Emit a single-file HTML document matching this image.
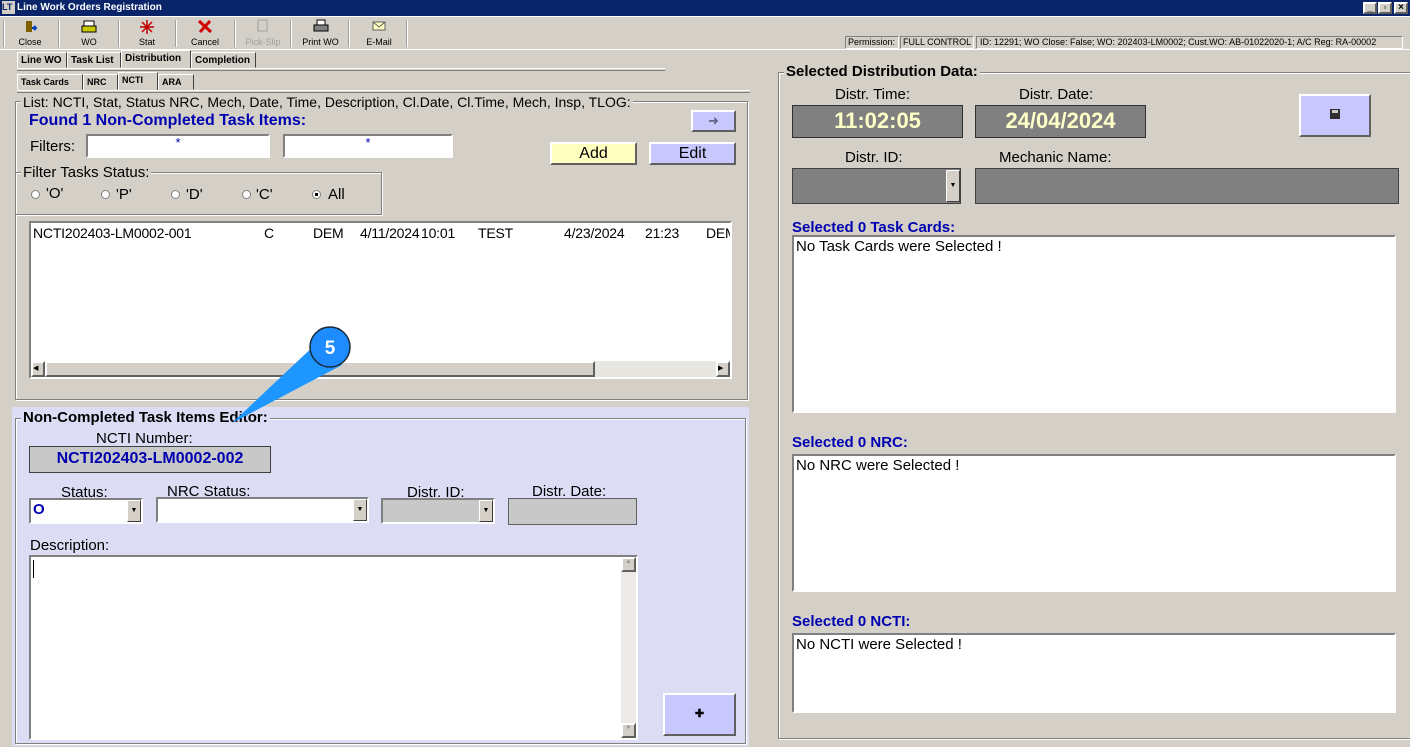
<!DOCTYPE html>
<html><head><meta charset="utf-8"><style>
*{box-sizing:border-box;margin:0;padding:0}
body{width:1410px;height:747px;background:#d4d0c8;font-family:"Liberation Sans",Arial,sans-serif;position:relative;overflow:hidden;color:#000}
.a{position:absolute}
.sunk{border:2px solid;border-color:#808080 #fff #fff #808080;background:#fff}
.rais{border:2px solid;border-color:#fff #606060 #606060 #fff}
.tb{position:absolute;top:19px;height:30px;font-size:9px;text-align:center;color:#000}
.tb span{position:absolute;bottom:2px;left:0;right:0}
.sep{position:absolute;top:20px;width:2px;height:27px;border-left:1px solid #a0a0a0;border-right:1px solid #fff}
.tab{position:absolute;font-size:10px;font-weight:bold;height:16px;line-height:15px;padding:0 3px;white-space:nowrap;overflow:hidden;border:1px solid;border-color:#fff #404040 transparent #fff;}
.grp{position:absolute;border:1px solid #808080;box-shadow:1px 1px 0 #fff inset,1px 1px 0 #fff}
.gt{position:absolute;background:#d4d0c8;padding:0 2px;font-size:14px;white-space:nowrap}
.lbl{position:absolute;font-size:14px;white-space:nowrap}
.blue{color:#0000b0;font-weight:bold;font-size:15px}
.rad{position:absolute;width:9px;height:9px;border-radius:50%;background:#fff;border:1px solid #808080}
.dd{position:absolute;width:14px;background:#d4d0c8;border:1px solid;border-color:#fff #404040 #404040 #fff;font-size:7px;text-align:center}
.row span{position:absolute;top:0}
</style></head><body>
<!-- title bar -->
<div class="a" style="left:0;top:0;width:1410px;height:16px;background:#0a246a"></div>
<div class="a" style="left:2px;top:1px;width:13px;height:13px;background:#d4d0c8;font-size:9px;color:#0a246a;font-weight:bold;line-height:13px">LT</div>
<div class="a" style="left:17px;top:2px;color:#fff;font-size:10px;font-weight:bold">Line Work Orders Registration</div>
<div class="a rais" style="left:1363px;top:2px;width:14px;height:12px;background:#d4d0c8;font-size:9px;line-height:8px;text-align:center;font-weight:bold">_</div>
<div class="a rais" style="left:1378px;top:2px;width:14px;height:12px;background:#d4d0c8;font-size:8px;line-height:8px;text-align:center;font-weight:bold">▫</div>
<div class="a rais" style="left:1394px;top:2px;width:14px;height:12px;background:#d4d0c8;font-size:10px;line-height:8px;text-align:center;font-weight:bold">×</div>
<!-- toolbar -->
<div class="a" style="left:0;top:16px;width:1410px;height:1px;background:#fff"></div>
<div class="sep" style="left:3px"></div>
<div class="tb" style="left:5px;width:50px"><svg width="14" height="14" style="margin-top:1px"><rect x="3" y="1" width="6" height="11" fill="#806000"/><path d="M9 8 h4 l-2 -2 M13 8 l-2 2" stroke="#0040c0" stroke-width="2" fill="none"/></svg><span>Close</span></div>
<div class="sep" style="left:58px"></div>
<div class="tb" style="left:63px;width:52px"><svg width="16" height="14" style="margin-top:1px"><rect x="3" y="1" width="10" height="5" fill="#fff" stroke="#000"/><rect x="1" y="6" width="14" height="6" fill="#c8c800" stroke="#000"/></svg><span>WO</span></div>
<div class="sep" style="left:118px"></div>
<div class="tb" style="left:121px;width:52px"><svg width="16" height="16"><path d="M8 1V15M1 8H15M3 3L13 13M13 3L3 13" stroke="#c00000" stroke-width="1.5"/></svg><span>Stat</span></div>
<div class="sep" style="left:175px"></div>
<div class="tb" style="left:178px;width:54px"><svg width="16" height="15"><path d="M2 2L14 13M13 2L3 13" stroke="#d00000" stroke-width="3"/></svg><span>Cancel</span></div>
<div class="sep" style="left:234px"></div>
<div class="tb" style="left:237px;width:52px;color:#a0a0a0"><svg width="16" height="14"><rect x="3" y="1" width="9" height="11" fill="none" stroke="#a0a0a0"/></svg><span>Pick-Slip</span></div>
<div class="sep" style="left:290px"></div>
<div class="tb" style="left:293px;width:55px"><svg width="16" height="14"><rect x="4" y="1" width="8" height="5" fill="#fff" stroke="#000"/><rect x="1" y="6" width="14" height="6" fill="#808080" stroke="#000"/></svg><span>Print WO</span></div>
<div class="sep" style="left:348px"></div>
<div class="tb" style="left:352px;width:54px"><svg width="16" height="14"><rect x="2" y="3" width="12" height="8" fill="#ffffc0" stroke="#606060"/><path d="M2 3L8 8L14 3" stroke="#606060" fill="none"/></svg><span>E-Mail</span></div>
<div class="sep" style="left:406px"></div>
<div class="a" style="left:0;top:49px;width:1410px;height:1px;background:#fff"></div>
<div class="a sunk" style="left:845px;top:36px;width:54px;height:13px;border-width:1px;background:#d4d0c8;font-size:9px;padding-left:2px;line-height:11px">Permission:</div>
<div class="a sunk" style="left:900px;top:36px;width:74px;height:13px;border-width:1px;background:#d4d0c8;font-size:9px;padding-left:2px;line-height:11px">FULL CONTROL</div>
<div class="a sunk" style="left:976px;top:36px;width:427px;height:13px;border-width:1px;background:#d4d0c8;font-size:9px;padding-left:3px;line-height:11px;white-space:nowrap">ID: 12291; WO Close: False; WO: 202403-LM0002; Cust.WO: AB-01022020-1; A/C Reg: RA-00002</div>
<!-- tabs -->
<div class="tab" style="left:17px;top:52px;width:50px">Line WO</div>
<div class="tab" style="left:67px;top:52px;width:54px">Task List</div>
<div class="tab" style="left:121px;top:50px;width:70px;height:19px;background:#d4d0c8">Distribution</div>
<div class="tab" style="left:191px;top:52px;width:65px">Completion</div>
<div class="a" style="left:17px;top:68px;width:648px;height:1px;background:#fff"></div>
<div class="a" style="left:17px;top:70px;width:648px;height:1px;background:#808080"></div>
<div class="tab" style="left:17px;top:74px;width:66px;font-size:9px">Task Cards</div>
<div class="tab" style="left:83px;top:74px;width:35px;font-size:9px">NRC</div>
<div class="tab" style="left:118px;top:72px;width:40px;height:19px;font-size:9px;background:#d4d0c8">NCTI</div>
<div class="tab" style="left:158px;top:74px;width:36px;font-size:9px">ARA</div>
<div class="a" style="left:17px;top:90px;width:733px;height:1px;background:#fff"></div>
<div class="a" style="left:17px;top:92px;width:733px;height:1px;background:#808080"></div>
<!-- list frame -->
<div class="grp" style="left:15px;top:101px;width:733px;height:299px"></div>
<div class="gt" style="left:21px;top:94px">List: NCTI, Stat, Status NRC, Mech, Date, Time, Description, Cl.Date, Cl.Time, Mech, Insp, TLOG:</div>
<div class="lbl blue" style="left:29px;top:112px;font-size:16px">Found 1 Non-Completed Task Items:</div>
<div class="a rais" style="left:691px;top:110px;width:45px;height:22px;background:#c8c8ff;text-align:center;color:#606080;font-size:13px;line-height:17px">➜</div>
<div class="lbl" style="left:30px;top:138px;font-size:15px">Filters:</div>
<div class="a sunk" style="left:86px;top:134px;width:184px;height:24px;text-align:center;color:#0000b0;font-size:13px;line-height:14px">*</div>
<div class="a sunk" style="left:283px;top:134px;width:170px;height:24px;text-align:center;color:#0000b0;font-size:13px;line-height:14px">*</div>
<div class="a rais" style="left:550px;top:142px;width:87px;height:23px;background:#ffffc0;text-align:center;font-size:16px;line-height:19px">Add</div>
<div class="a rais" style="left:649px;top:142px;width:87px;height:23px;background:#c8c8ff;text-align:center;font-size:16px;line-height:19px">Edit</div>
<div class="grp" style="left:15px;top:172px;width:367px;height:43px"></div>
<div class="gt" style="left:21px;top:164px;font-size:15px">Filter Tasks Status:</div>
<div class="rad" style="left:31px;top:190px"></div><div class="lbl" style="left:46px;top:185px;font-size:15px">'O'</div>
<div class="rad" style="left:101px;top:190px"></div><div class="lbl" style="left:116px;top:186px;font-size:15px">'P'</div>
<div class="rad" style="left:171px;top:190px"></div><div class="lbl" style="left:186px;top:186px;font-size:15px">'D'</div>
<div class="rad" style="left:242px;top:190px"></div><div class="lbl" style="left:256px;top:186px;font-size:15px">'C'</div>
<div class="rad" style="left:312px;top:190px"><div style="width:3px;height:3px;background:#000;margin:2px"></div></div><div class="lbl" style="left:328px;top:186px;font-size:15px">All</div>
<div class="a sunk" style="left:29px;top:221px;width:703px;height:158px;overflow:hidden">
<div class="a row" style="left:0;top:2px;width:700px;height:18px;font-size:14px;white-space:nowrap;letter-spacing:-0.2px"><span style="left:2px">NCTI202403-LM0002-001</span><span style="left:233px">C</span><span style="left:282px">DEM</span><span style="left:329px">4/11/2024</span><span style="left:390px">10:01</span><span style="left:447px">TEST</span><span style="left:533px">4/23/2024</span><span style="left:614px">21:23</span><span style="left:675px">DEM</span></div>
<div class="a" style="left:0;bottom:0;width:699px;height:16px;background:#e8e6e0">
<div class="a rais" style="left:0;top:0;width:14px;height:16px;background:#d4d0c8;font-size:7px;line-height:12px">◀</div>
<div class="a rais" style="left:14px;top:0;width:550px;height:16px;background:#d4d0c8"></div>
<div class="a rais" style="right:0;top:0;width:14px;height:16px;background:#d4d0c8;font-size:7px;line-height:12px">▶</div></div>
</div>
<!-- editor -->
<div class="a" style="left:12px;top:407px;width:737px;height:339px;background:#dcdcf4"></div>
<div class="grp" style="left:15px;top:418px;width:731px;height:326px"></div>
<div class="gt" style="left:21px;top:409px;background:#dcdcf4;font-weight:bold;font-size:15px">Non-Completed Task Items Editor:</div>
<div class="lbl" style="left:96px;top:430px;font-size:15px">NCTI Number:</div>
<div class="a" style="left:29px;top:446px;width:242px;height:27px;background:#c8c8c8;border:1px solid #404040;text-align:center;color:#0000b0;font-weight:bold;font-size:16px;line-height:24px">NCTI202403-LM0002-002</div>
<div class="lbl" style="left:61px;top:484px;font-size:15px">Status:</div>
<div class="lbl" style="left:167px;top:483px;font-size:15px">NRC Status:</div>
<div class="lbl" style="left:407px;top:484px;font-size:15px">Distr. ID:</div>
<div class="lbl" style="left:532px;top:483px;font-size:15px">Distr. Date:</div>
<div class="a sunk" style="left:29px;top:498px;width:114px;height:26px;color:#0000b0;font-weight:bold;font-size:15px;padding-left:2px;line-height:20px">O</div>
<div class="dd" style="left:127px;top:500px;height:22px;line-height:20px">▼</div>
<div class="a sunk" style="left:156px;top:497px;width:213px;height:26px"></div>
<div class="dd" style="left:353px;top:499px;height:22px;line-height:20px">▼</div>
<div class="a sunk" style="left:381px;top:498px;width:114px;height:26px;background:#c8c8c8"></div>
<div class="dd" style="left:479px;top:500px;height:22px;line-height:20px">▼</div>
<div class="a" style="left:508px;top:498px;width:129px;height:27px;background:#c8c8c8;border:1px solid #606060"></div>
<div class="lbl" style="left:30px;top:537px;font-size:15px">Description:</div>
<div class="a sunk" style="left:29px;top:555px;width:609px;height:185px">
<div class="a" style="left:2px;top:3px;width:1px;height:18px;background:#000"></div>
<div class="a" style="right:0;top:0;width:15px;height:181px;background:#ebeae6"><div class="rais" style="height:15px;background:#d4d0c8;font-size:6px;text-align:center;color:#909090">▲</div><div class="rais" style="position:absolute;bottom:0;width:15px;height:15px;background:#d4d0c8;font-size:6px;text-align:center;color:#909090">▼</div></div>
</div>
<div class="a rais" style="left:663px;top:693px;width:73px;height:43px;background:#c8c8ff;text-align:center;font-size:11px;line-height:38px;font-weight:bold">✚</div>
<!-- callout -->
<svg class="a" style="left:220px;top:320px" width="140" height="110"><path d="M98 22 L12 103 L122 45 Z" fill="#1e96ff"/><circle cx="110" cy="27" r="20" fill="#1e8cff" stroke="#1a2a3a" stroke-width="1.5"/><text x="110" y="34" text-anchor="middle" font-family="Liberation Sans" font-weight="bold" font-size="19" fill="#fff">5</text></svg>
<!-- right frame -->
<div class="grp" style="left:778px;top:72px;width:640px;height:667px"></div>
<div class="gt" style="left:784px;top:63px;font-weight:bold;font-size:15px">Selected Distribution Data:</div>
<div class="lbl" style="left:835px;top:86px;font-size:15px">Distr. Time:</div>
<div class="lbl" style="left:1019px;top:86px;font-size:15px">Distr. Date:</div>
<div class="a" style="left:792px;top:105px;width:171px;height:33px;background:#808080;border:1px solid #303030;text-align:center;color:#ffffc8;font-weight:bold;font-size:22px;line-height:30px">11:02:05</div>
<div class="a" style="left:975px;top:105px;width:171px;height:33px;background:#808080;border:1px solid #303030;text-align:center;color:#ffffc8;font-weight:bold;font-size:22px;line-height:30px">24/04/2024</div>
<div class="a rais" style="left:1299px;top:94px;width:72px;height:43px;background:#c8c8ff"><div style="position:absolute;left:29px;top:13px;width:10px;height:10px;background:#303030"><div style="margin:1px 2px;width:6px;height:3px;background:#ccc"></div></div></div>
<div class="lbl" style="left:845px;top:149px;font-size:15px">Distr. ID:</div>
<div class="lbl" style="left:999px;top:149px;font-size:15px">Mechanic Name:</div>
<div class="a" style="left:792px;top:168px;width:169px;height:36px;background:#808080;border:1px solid #404040"></div>
<div class="dd" style="left:946px;top:170px;height:32px;line-height:30px">▼</div>
<div class="a" style="left:975px;top:168px;width:424px;height:36px;background:#808080;border:1px solid #404040"></div>
<div class="lbl blue" style="left:792px;top:219px">Selected 0 Task Cards:</div>
<div class="a sunk" style="left:792px;top:235px;width:604px;height:178px;font-size:15px;padding:1px 2px">No Task Cards were Selected !</div>
<div class="lbl blue" style="left:792px;top:434px">Selected 0 NRC:</div>
<div class="a sunk" style="left:792px;top:454px;width:604px;height:138px;font-size:15px;padding:1px 2px">No NRC were Selected !</div>
<div class="lbl blue" style="left:792px;top:613px">Selected 0 NCTI:</div>
<div class="a sunk" style="left:792px;top:633px;width:604px;height:80px;font-size:15px;padding:1px 2px">No NCTI were Selected !</div>
</body></html>
